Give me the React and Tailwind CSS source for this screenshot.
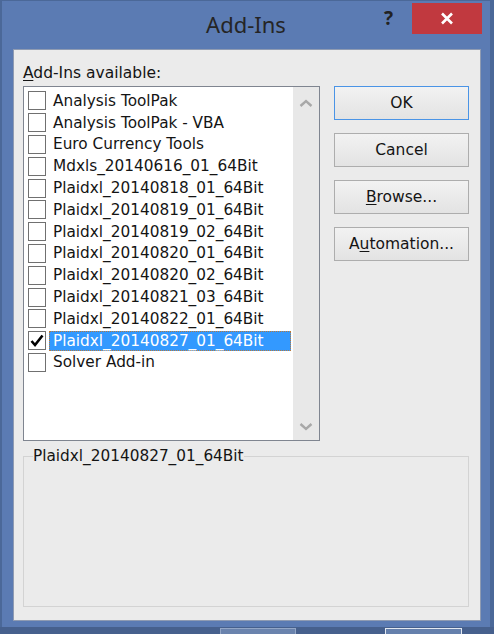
// Cuadro de diálogo "Add-Ins" estilo Windows 8
import React from "react";

const items = [
  "Analysis ToolPak",
  "Analysis ToolPak - VBA",
  "Euro Currency Tools",
  "Mdxls_20140616_01_64Bit",
  "Plaidxl_20140818_01_64Bit",
  "Plaidxl_20140819_01_64Bit",
  "Plaidxl_20140819_02_64Bit",
  "Plaidxl_20140820_01_64Bit",
  "Plaidxl_20140820_02_64Bit",
  "Plaidxl_20140821_03_64Bit",
  "Plaidxl_20140822_01_64Bit",
  "Plaidxl_20140827_01_64Bit",
  "Solver Add-in",
];

const selected = "Plaidxl_20140827_01_64Bit";

const Checkbox = ({ checked }) => (
  <div className="w-[18px] h-[19px] shrink-0 border border-[#707070] bg-white">
    {checked && (
      <svg width="16" height="17" viewBox="0 0 16 17">
        <path d="M2.5 9 L6 13 L13.5 3.5" fill="none" stroke="#000" strokeWidth="2.6" />
      </svg>
    )}
  </div>
);

const DialogButton = ({ children, primary }) => (
  <button
    className={
      "w-[135px] h-[34px] pt-[2px] border bg-gradient-to-b from-[#f2f2f2] to-[#e3e3e3] text-[15.5px] text-[#141414] " +
      (primary ? "border-[#4a94e6]" : "border-[#adadad]")
    }
  >
    {children}
  </button>
);

const App = () => {
  return (
    <div className="w-[494px] h-[634px] flex flex-col bg-[#5b7bb3] font-['DejaVu_Sans',sans-serif] overflow-hidden">
      <div className="flex-1 flex flex-col border-l-2 border-r-4 border-t border-[#4b6898]">
        {/* barra de título */}
        <div className="relative h-[48px] flex justify-center pt-[8px]">
          <span className="font-['Noto_Sans',sans-serif] text-[22px] leading-[30px] text-[#252525]">
            Add-Ins
          </span>
          <span className="absolute left-[382px] top-[3px] font-['Noto_Sans',sans-serif] font-bold text-[19px] text-[#222]">
            ?
          </span>
          <div className="absolute left-[410px] top-[2px] w-[70px] h-[31px] bg-[#c1393f] flex items-center justify-center">
            <svg width="14" height="13" viewBox="0 0 14 13">
              <path d="M2 1.5 L12 11.5 M12 1.5 L2 11.5" stroke="#fff" strokeWidth="2.6" />
            </svg>
          </div>
        </div>

        {/* área cliente */}
        <div className="ml-[11px] w-[468px] h-[572px] bg-[#ebebeb] border border-[#8f9bb2] pl-[9px]">
          <div className="mt-[14px] h-[18px] text-[15.5px] leading-[18px] text-[#141414]">
            <span className="underline underline-offset-2">A</span>dd-Ins available:
          </div>

          <div className="mt-[4px] flex gap-[14px]">
            <div className="w-[297px] h-[355px] border border-[#7f8590] bg-white flex">
              <div className="flex-1 pt-[3px] pl-[4px]">
                {items.map((name) => {
                  const isSel = name === selected;
                  return (
                    <div key={name} className="h-[21.8px] flex items-center">
                      <Checkbox checked={isSel} />
                      <div
                        className={
                          "ml-[3px] mr-[2px] flex-1 h-[20px] flex items-center px-[3px] text-[15.3px] leading-[18px] whitespace-nowrap border " +
                          (isSel
                            ? "bg-[#3399ff] text-white border-dotted border-[#b77a3c]"
                            : "text-[#141414] border-transparent")
                        }
                      >
                        {name}
                      </div>
                    </div>
                  );
                })}
              </div>
              <div className="w-[26px] bg-[#e8e8e8] flex flex-col items-center justify-between pt-[12px] pb-[9px]">
                <svg width="14" height="8" viewBox="0 0 14 8">
                  <path d="M1.5 7 L7 2 L12.5 7" fill="none" stroke="#a8a8a8" strokeWidth="2.4" />
                </svg>
                <svg width="14" height="8" viewBox="0 0 14 8">
                  <path d="M1.5 1 L7 6 L12.5 1" fill="none" stroke="#a8a8a8" strokeWidth="2.4" />
                </svg>
              </div>
            </div>

            <div className="flex flex-col gap-[13px]">
              <DialogButton primary>OK</DialogButton>
              <DialogButton>Cancel</DialogButton>
              <DialogButton>
                <span className="underline underline-offset-2">B</span>rowse...
              </DialogButton>
              <DialogButton>
                A<span className="underline underline-offset-2">u</span>tomation...
              </DialogButton>
            </div>
          </div>

          <fieldset className="mt-[6px] w-[446px] h-[160px] border border-[#d3d3d3]">
            <legend className="ml-[9px] text-[15.3px] leading-[18px] text-[#141414]">
              Plaidxl_20140827_01_64Bit
            </legend>
          </fieldset>
        </div>
        <div className="flex-1" />
      </div>

      {/* franja inferior */}
      <div className="h-[7px] bg-[#46608d] flex">
        <div className="ml-[220px] w-[76px] h-full mt-[1px] bg-[#6a83ad] border-t border-x border-[#93a6c6]" />
        <div className="ml-[89px] w-[77px] h-full mt-[1px] bg-[#6580ac] border-t border-x border-[#e2e8f1]" />
      </div>
    </div>
  );
};

export default App;
